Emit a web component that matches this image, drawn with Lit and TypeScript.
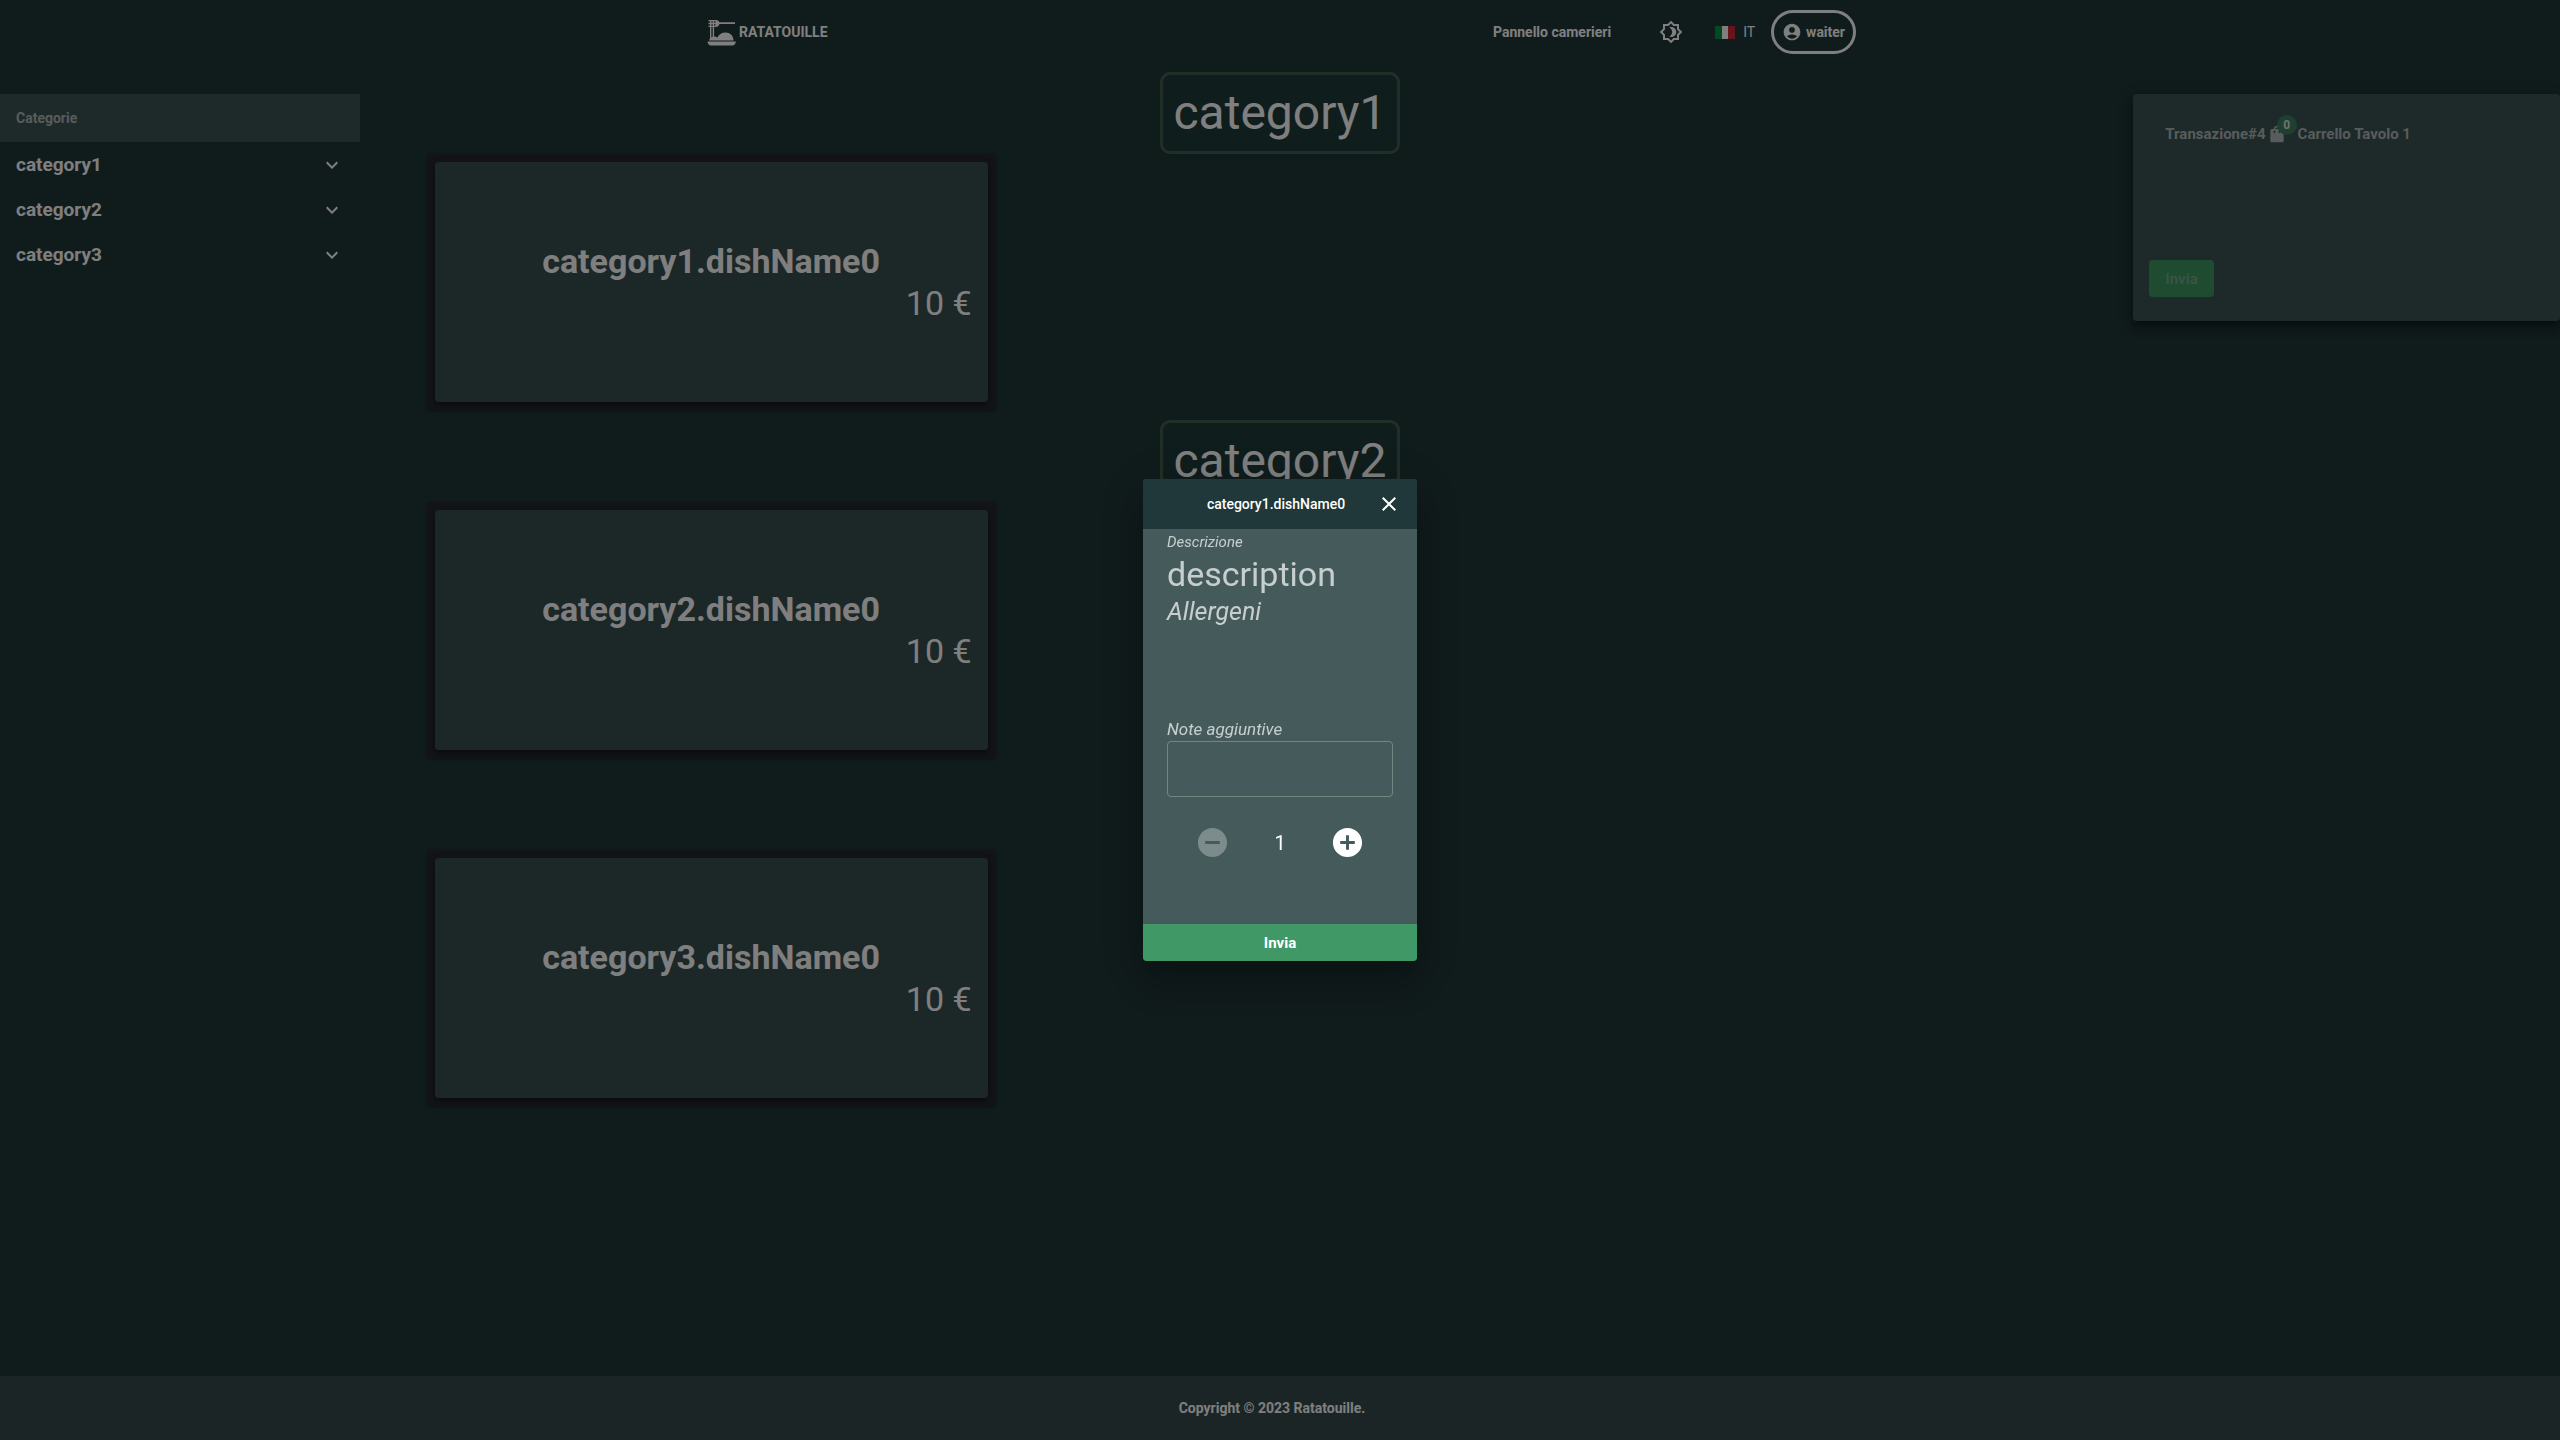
import { LitElement, html, css, svg } from "lit";
import { customElement, state } from "lit/decorators.js";

interface Category {
  name: string;
  dishes: { name: string; price: number }[];
}

const CATEGORIES: Category[] = ["category1", "category2", "category3"].map((name) => ({
  name,
  dishes: [{ name: `${name}.dishName0`, price: 10 }],
}));

const icon = (path: string, cls = "icon") =>
  html`<svg class=${cls} viewBox="0 0 24 24" aria-hidden="true">${svg`<path d=${path}></path>`}</svg>`;

const ICONS = {
  chevron: "M7.41 8.59 12 13.17l4.59-4.58L18 10l-6 6-6-6 1.41-1.41z",
  close: "M19 6.41 17.59 5 12 10.59 6.41 5 5 6.41 10.59 12 5 17.59 6.41 19 12 13.41 17.59 19 19 17.59 13.41 12z",
  account:
    "M12 2C6.48 2 2 6.48 2 12s4.48 10 10 10 10-4.48 10-10S17.52 2 12 2zm0 4c1.93 0 3.5 1.57 3.5 3.5S13.93 13 12 13s-3.5-1.57-3.5-3.5S10.07 6 12 6zm0 14c-2.03 0-4.43-.82-6.14-2.88C7.55 15.8 9.68 15 12 15s4.45.8 6.14 2.12C16.43 19.18 14.03 20 12 20z",
  brightness:
    "M20 8.69V4h-4.69L12 .69 8.69 4H4v4.69L.69 12 4 15.31V20h4.69L12 23.31 15.31 20H20v-4.69L23.31 12 20 8.69zm-2 5.79V18h-3.52L12 20.48 9.52 18H6v-3.52L3.52 12 6 9.52V6h3.52L12 3.52 14.48 6H18v3.52L20.48 12 18 14.48zM12.29 7c-.74 0-1.45.17-2.08.46 1.72.79 2.92 2.53 2.92 4.54s-1.2 3.75-2.92 4.54c.63.29 1.34.46 2.08.46 2.76 0 5-2.24 5-5s-2.24-5-5-5z",
  bag: "M18 6h-2c0-2.21-1.79-4-4-4S8 3.79 8 6H6c-1.1 0-2 .9-2 2v12c0 1.1.9 2 2 2h12c1.1 0 2-.9 2-2V8c0-1.1-.9-2-2-2zm-8 4c0 .55-.45 1-1 1s-1-.45-1-1V8h2v2zm2-6c1.1 0 2 .9 2 2h-4c0-1.1.9-2 2-2zm4 6c0 .55-.45 1-1 1s-1-.45-1-1V8h2v2z",
  minus: "M12 2C6.48 2 2 6.48 2 12s4.48 10 10 10 10-4.48 10-10S17.52 2 12 2zm5 11H7v-2h10v2z",
  plus: "M12 2C6.48 2 2 6.48 2 12s4.48 10 10 10 10-4.48 10-10S17.52 2 12 2zm5 11h-4v4h-2v-4H7v-2h4V7h2v4h4v2z",
};

@customElement("app-root")
export class AppRoot extends LitElement {
  @state() private quantity = 1;
  @state() private open = true;

  static styles = css`
    :host {
      display: block;
      font: 400 14px/20px Roboto, "Liberation Sans", sans-serif;
      color: #fff;
    }
    * {
      box-sizing: border-box;
    }
    button {
      font: inherit;
      color: inherit;
      background: none;
      border: 0;
      padding: 0;
      cursor: pointer;
    }
    button:disabled {
      cursor: default;
    }
    a {
      color: inherit;
      text-decoration: none;
    }
    h1,
    h2,
    h3,
    p,
    ul {
      margin: 0;
      padding: 0;
      list-style: none;
    }
    .icon {
      width: 24px;
      height: 24px;
      fill: currentColor;
      display: block;
    }
    .icon.small {
      width: 20px;
      height: 20px;
    }
    .icon.large {
      width: 35px;
      height: 35px;
    }
    .page {
      min-height: 100vh;
      display: flex;
      flex-direction: column;
      background: #203638;
    }

    .bar {
      height: 64px;
      width: 100%;
      max-width: 1152px;
      margin: 0 auto;
      padding-left: 2px;
      display: flex;
      align-items: center;
      justify-content: space-between;
      font-weight: 700;
    }
    .brand,
    .tools,
    .language,
    .user {
      display: flex;
      align-items: center;
    }
    .brand {
      gap: 1px;
    }
    .logo {
      width: 32px;
      height: 32px;
    }
    .theme {
      margin: 0 32px 0 48px;
    }
    .language {
      gap: 8px;
      font-weight: 400;
      margin-right: 16px;
    }
    .flag {
      width: 20px;
      height: 13px;
      display: block;
    }
    .user {
      height: 44px;
      border: 3px solid #fff;
      border-radius: 22px;
      padding: 0 8px;
      gap: 4px;
    }

    .columns {
      flex: 1;
      display: grid;
      grid-template-columns: 1fr 4fr 1fr;
      align-items: start;
    }
    .sidebar {
      max-width: 360px;
      margin-top: 30px;
    }
    .sidebar h2 {
      font-size: 14px;
      line-height: 20px;
      font-weight: 700;
      padding: 14px 16px;
      background: #3c5252;
      color: rgba(255, 255, 255, 0.6);
    }
    .group {
      width: 100%;
      height: 45px;
      padding: 0 16px;
      display: flex;
      align-items: center;
      justify-content: space-between;
      font-size: 19px;
      font-weight: 700;
    }

    .menu {
      padding: 8px 0 16px;
      display: flex;
      flex-direction: column;
      gap: 10px;
    }
    .section {
      display: flex;
      flex-direction: column;
      align-items: center;
    }
    .section h1 {
      font-size: 48px;
      line-height: 56px;
      font-weight: 400;
      padding: 10px;
      border: 3px solid #42604c;
      border-radius: 10px;
      background: #1e3a38;
    }
    .dishes {
      width: 100%;
      display: grid;
      grid-template-columns: repeat(3, 1fr);
    }
    .frame {
      padding: 8px;
      background: #26282d;
      box-shadow: 0 1px 3px rgba(0, 0, 0, 0.3);
      border-radius: 4px;
    }
    .dish {
      width: 100%;
      height: 240px;
      padding: 0 16px;
      display: flex;
      flex-direction: column;
      justify-content: center;
      border-radius: 4px;
      background: #384e4e;
      box-shadow: 0 3px 6px rgba(0, 0, 0, 0.5);
      font-size: 34px;
      line-height: 42px;
      text-align: center;
    }
    .dish strong {
      font-weight: 700;
    }
    .price {
      text-align: right;
    }

    .cart {
      margin-top: 30px;
      padding: 30px 16px 24px;
      min-height: 227px;
      display: flex;
      flex-direction: column;
      align-items: flex-start;
      justify-content: space-between;
      border-radius: 4px;
      background: #3c5252;
      box-shadow: 0 5px 5px -3px rgba(0, 0, 0, 0.3), 0 8px 10px 1px rgba(0, 0, 0, 0.2),
        0 3px 14px 2px rgba(0, 0, 0, 0.18);
    }
    .cart-title {
      padding-left: 16px;
      display: flex;
      align-items: center;
      font-size: 15px;
      font-weight: 700;
      color: rgba(255, 255, 255, 0.6);
    }
    .bag {
      position: relative;
      margin: 0 11px 0 1px;
    }
    .badge {
      position: absolute;
      top: -9px;
      left: 10px;
      width: 20px;
      height: 20px;
      border-radius: 50%;
      background: #3a8060;
      color: #e0e0e0;
      font-size: 12px;
      font-weight: 700;
      text-align: center;
    }
    .send {
      height: 37px;
      padding: 0 16px;
      border-radius: 4px;
      background: #3e9662;
      font-size: 15px;
      font-weight: 700;
      color: #74a888;
    }

    .footer {
      height: 64px;
      padding-right: 16px;
      display: flex;
      align-items: center;
      justify-content: center;
      background: #364a4a;
      font-weight: 700;
    }

    .backdrop {
      position: fixed;
      inset: 0;
      display: flex;
      align-items: center;
      justify-content: center;
      background: rgba(0, 0, 0, 0.5);
    }
    .dialog {
      width: 274px;
      display: flex;
      flex-direction: column;
      overflow: hidden;
      border-radius: 4px;
      background: #455a5b;
      box-shadow: 0 11px 15px -7px rgba(0, 0, 0, 0.2), 0 24px 38px 3px rgba(0, 0, 0, 0.14),
        0 9px 46px 8px rgba(0, 0, 0, 0.12);
    }
    .dialog-head {
      height: 50px;
      padding: 0 16px;
      display: grid;
      grid-template-columns: 1fr 24px;
      align-items: center;
      background: #203839;
    }
    .dialog-head h2 {
      font-size: 14px;
      font-weight: 500;
      text-align: center;
      padding-left: 16px;
    }
    .dialog-body {
      padding: 0 24px;
      height: 395px;
      display: flex;
      flex-direction: column;
      color: rgba(255, 255, 255, 0.7);
    }
    .label {
      font-size: 15px;
      font-style: italic;
      padding-top: 3px;
    }
    .description {
      font-size: 34px;
      line-height: 40px;
      padding-top: 2px;
    }
    .allergens {
      font-size: 25px;
      line-height: 36px;
      font-style: italic;
      font-weight: 400;
      margin-bottom: 89px;
    }
    .notes-label {
      font-size: 17px;
      line-height: 20px;
      font-style: italic;
    }
    .notes {
      width: 100%;
      height: 56px;
      margin-top: 2px;
      padding: 16px;
      border: 1px solid #72877f;
      border-radius: 4px;
      background: transparent;
      color: #fff;
      font: inherit;
      resize: none;
      display: block;
      outline: 0;
    }
    .stepper {
      margin-top: 28px;
      padding: 0 28px;
      display: flex;
      align-items: center;
      justify-content: space-between;
      font-size: 20px;
      color: #fff;
    }
    .stepper button:disabled {
      color: #7c8b8b;
    }
    .confirm {
      height: 37px;
      background: #409867;
      font-size: 15px;
      font-weight: 700;
    }
  `;

  private renderLogo() {
    return html`<svg class="logo" viewBox="0 0 32 32" fill="#fff" aria-hidden="true">
      <path d="M2.5 4H10c2 0 3 1 3.4 2.3H29v1.8H13.4C13 9.800 12 11 10 11H2.500V9.700H4V8.300H2.500V6.800H4V5.300H2.500z" />
      <path d="M4 11h1.400v13H4zM6.700 11h1.400v12H6.700z" />
      <path d="M3 24.500c1-3 3-4 5-4 1.500 0 2.500.5 3.500 1 1.500-3.300 4.500-5 8-5 4.500 0 8 3.200 8 8z" />
      <path d="M1.500 25.500h28.300c0 2-1.500 4-3.300 4H5c-2 0-3.500-2-3.500-4z" />
      <path d="M5.400 5.300h1.300v1.500H5.400zM8.100 5.300h1.300v1.500H8.100zM5.400 8.300h1.300v1.400H5.400zM8.100 8.300h1.300v1.400H8.100z" fill="#203638" />
    </svg>`;
  }

  private renderHeader() {
    return html`<header class="bar">
      <a class="brand" href="#">${this.renderLogo()}<span>RATATOUILLE</span></a>
      <nav class="tools">
        <a href="#panel">Pannello camerieri</a>
        <button class="theme" aria-label="Tema">${icon(ICONS.brightness)}</button>
        <button class="language">
          <svg class="flag" viewBox="0 0 20 13" aria-hidden="true">
            <path fill="#009246" d="M0 0h7v13H0z" />
            <path fill="#fff" d="M7 0h6v13H7z" />
            <path fill="#ce2b37" d="M13 0h7v13h-7z" />
          </svg>
          IT
        </button>
        <button class="user">${icon(ICONS.account, "icon small")}waiter</button>
      </nav>
    </header>`;
  }

  private renderDialog() {
    return html`<div class="backdrop">
      <section class="dialog" role="dialog" aria-modal="true" aria-labelledby="dialog-title">
        <header class="dialog-head">
          <h2 id="dialog-title">category1.dishName0</h2>
          <button aria-label="Chiudi" @click=${() => (this.open = false)}>
            ${icon(ICONS.close)}
          </button>
        </header>
        <div class="dialog-body">
          <p class="label">Descrizione</p>
          <p class="description">description</p>
          <h3 class="allergens">Allergeni</h3>
          <label class="notes-label" for="notes">Note aggiuntive</label>
          <textarea class="notes" id="notes"></textarea>
          <div class="stepper">
            <button
              aria-label="Diminuisci"
              ?disabled=${this.quantity <= 1}
              @click=${() => this.quantity--}
            >
              ${icon(ICONS.minus, "icon large")}
            </button>
            <span>${this.quantity}</span>
            <button aria-label="Aumenta" @click=${() => this.quantity++}>
              ${icon(ICONS.plus, "icon large")}
            </button>
          </div>
        </div>
        <button class="confirm">Invia</button>
      </section>
    </div>`;
  }

  render() {
    return html`<div class="page">
        ${this.renderHeader()}
        <div class="columns">
          <aside class="sidebar">
            <h2>Categorie</h2>
            <ul>
              ${CATEGORIES.map(
                (c) => html`<li>
                  <button class="group">${c.name}${icon(ICONS.chevron, "icon")}</button>
                </li>`
              )}
            </ul>
          </aside>
          <main class="menu">
            ${CATEGORIES.map(
              (c) => html`<section class="section">
                <h1>${c.name}</h1>
                <div class="dishes">
                  ${c.dishes.map(
                    (d) => html`<div class="frame">
                      <button class="dish">
                        <strong>${d.name}</strong>
                        <span class="price">${d.price} €</span>
                      </button>
                    </div>`
                  )}
                </div>
              </section>`
            )}
          </main>
          <aside class="cart">
            <div class="cart-title">
              <span>Transazione#4</span>
              <span class="bag">${icon(ICONS.bag, "icon small")}<span class="badge">0</span></span>
              <span>Carrello Tavolo 1</span>
            </div>
            <button class="send" disabled>Invia</button>
          </aside>
        </div>
        <footer class="footer">Copyright © 2023 Ratatouille.</footer>
      </div>
      ${this.open ? this.renderDialog() : null}`;
  }
}
